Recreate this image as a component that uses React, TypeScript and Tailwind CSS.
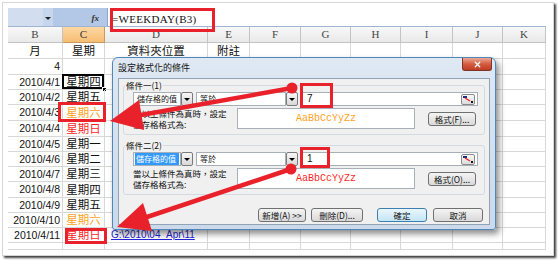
import { X } from 'lucide-react';

const COLS = [
  { id: 'B', w: 'w-[55px]' },
  { id: 'C', w: 'w-[42px]' },
  { id: 'D', w: 'w-[103px]' },
  { id: 'E', w: 'w-[42px]' },
  { id: 'F', w: 'w-[51px]' },
  { id: 'G', w: 'w-[50px]' },
  { id: 'H', w: 'w-[50px]' },
  { id: 'I', w: 'w-[52px]' },
  { id: 'J', w: 'w-[50px]' },
  { id: 'K', w: 'w-[43px]' },
];

type Row = {
  h: string;
  head?: boolean;
  date?: string;
  day?: string;
  tone?: 'orange' | 'red';
  link?: string;
  selected?: boolean;
};

const ROWS: Row[] = [
  { h: 'h-[16px]', head: true },
  { h: 'h-[16px]', date: '4' },
  { h: 'h-[15px]', date: '2010/4/1', day: '星期四', selected: true },
  { h: 'h-[15px]', date: '2010/4/2', day: '星期五' },
  { h: 'h-[16px]', date: '2010/4/3', day: '星期六', tone: 'orange' },
  { h: 'h-[16px]', date: '2010/4/4', day: '星期日', tone: 'red' },
  { h: 'h-[15px]', date: '2010/4/5', day: '星期一' },
  { h: 'h-[15px]', date: '2010/4/6', day: '星期二' },
  { h: 'h-[15px]', date: '2010/4/7', day: '星期三' },
  { h: 'h-[16px]', date: '2010/4/8', day: '星期四' },
  { h: 'h-[15px]', date: '2010/4/9', day: '星期五' },
  { h: 'h-[15px]', date: '2010/4/10', day: '星期六', tone: 'orange' },
  { h: 'h-[15px]', date: '2010/4/11', day: '星期日', tone: 'red', link: 'G:\\2010\\04_Apr\\11' },
  { h: 'h-[7px]' },
];

const cjk = "font-['Noto_Sans_CJK_TC',sans-serif]";
const toneClass = { orange: 'text-[#ffa11c]', red: 'text-[#ff1f1f]' };

function cellContent(r: Row, col: string) {
  if (r.head) {
    const label: Record<string, string> = { B: '月', C: '星期', D: '資料夾位置', E: '附註' };
    if (!label[col]) return null;
    return <span className={`w-full text-center text-[11.5px] leading-none text-[#111] ${cjk}`}>{label[col]}</span>;
  }
  if (col === 'B' && r.date) {
    return (
      <span className="w-full text-right pr-[2px] text-[10.5px] leading-none text-[#111] font-['Liberation_Sans',sans-serif]">
        {r.date}
      </span>
    );
  }
  if (col === 'C' && r.day) {
    return (
      <span className={`w-full text-center text-[11.5px] leading-none ${cjk} ${r.tone ? toneClass[r.tone] : 'text-[#111]'}`}>
        {r.day}
      </span>
    );
  }
  if (col === 'D' && r.link) {
    return (
      <span className="pl-[6px] text-[10px] leading-none text-[#2424d8] underline whitespace-nowrap font-['Liberation_Sans',sans-serif]">
        {r.link}
      </span>
    );
  }
  return null;
}

function Combo({ text, w, selected }: { text: string; w: string; selected?: boolean }) {
  return (
    <div className="flex h-full">
      <div
        className={`${w} h-full bg-white border border-[#a7afb9] flex items-center px-[1px] text-[8px] leading-none whitespace-nowrap overflow-hidden ${cjk}`}
      >
        {selected ? (
          <span className="w-full h-full flex items-center bg-[#3399ff] text-white pl-[1px]">{text}</span>
        ) : (
          <span className="pl-[2px] text-[#111]">{text}</span>
        )}
      </div>
      <div className="w-[12px] h-full border border-[#7b7b7b] rounded-[2px] bg-gradient-to-b from-[#f6f6f6] to-[#d8d8d8] flex items-center justify-center">
        <span className="w-0 h-0 border-l-[3px] border-r-[3px] border-t-[3px] border-l-transparent border-r-transparent border-t-black" />
      </div>
    </div>
  );
}

function Btn({ children, className }: { children: React.ReactNode; className: string }) {
  return (
    <div
      className={`h-[14px] rounded-[3px] border flex items-center justify-center text-[8.5px] leading-none text-[#111] whitespace-nowrap ${cjk} ${className}`}
    >
      {children}
    </div>
  );
}

function RefIcon() {
  return (
    <div className="w-[14px] h-[11px] border border-[#8a8a8a] rounded-[2px] bg-gradient-to-b from-[#f8f8f8] to-[#dcdcdc] flex items-center justify-center">
      <svg width="10" height="7" viewBox="0 0 10 7">
        <rect x="0" y="0" width="4" height="2" fill="#1c2f8a" />
        <path d="M2 2 L7 5" stroke="#e22" strokeWidth="1.4" />
        <rect x="8" y="5" width="2" height="2" fill="#111" />
      </svg>
    </div>
  );
}

function Condition({ legend, value, tone, selected }: { legend: string; value: string; tone: 'orange' | 'red'; selected?: boolean }) {
  return (
    <fieldset className="border border-[#d3dbe2] rounded-[3px] pl-[9px] pr-[6px] pb-[4px]">
      <legend className={`ml-[-8px] px-[1px] text-[8.5px] leading-[12px] text-[#111] ${cjk}`}>{legend}</legend>
      <div className="mt-[1px] flex h-[14px]">
        <Combo text="儲存格的值" w="w-[48px]" selected={selected} />
        <div className="ml-[3px]">
          <Combo text="等於" w="w-[90px]" />
        </div>
        <div className="ml-[4px] flex-1 h-full bg-white border border-[#a7afb9] flex items-center justify-between pl-[4px] pr-[2px]">
          <span className="text-[10px] leading-none text-[#111] font-['Liberation_Sans',sans-serif]">{value}</span>
          <RefIcon />
        </div>
      </div>
      <div className="mt-[2px] flex items-start">
        <div className={`w-[104px] text-[8.5px] leading-[11px] text-[#111] whitespace-nowrap ${cjk}`}>
          <div>當以上條件為真時，設定</div>
          <div>儲存格格式為:</div>
        </div>
        <div className="w-[178px] h-[21px] bg-white border border-[#a7afb9] flex items-center justify-center">
          <span className={`text-[10px] leading-none font-['Liberation_Mono',monospace] ${toneClass[tone]}`}>AaBbCcYyZz</span>
        </div>
        <Btn className="ml-[13px] mt-[4px] w-[48px] border-[#707070] bg-gradient-to-b from-[#f4f4f4] to-[#d9d9d9]">
          {tone === 'orange' ? '格式(F)...' : '格式(O)...'}
        </Btn>
      </div>
    </fieldset>
  );
}

export default function App() {
  return (
    <div className="relative w-[558px] h-[260px] bg-white pl-[2px] pt-[2px] overflow-hidden">
      <div className="w-[552px] h-[254px] border border-[#d6d6d6] shadow-[2px_2px_2px_rgba(0,0,0,0.75)] pl-[5px] pt-[5px] bg-white">
        <div className="relative w-[538px] h-[242px] overflow-hidden bg-white">
          {/* formula bar */}
          <div className="flex h-[19px] border-b border-[#9eb4d0]">
            <div className="w-[35px] bg-[#d2def0]" />
            <div className="w-[10px] bg-[#c5d6ed] flex items-center justify-center pt-[2px]">
              <span className="w-0 h-0 border-l-[3px] border-r-[3px] border-t-[3px] border-l-transparent border-r-transparent border-t-[#222]" />
            </div>
            <div className="w-[54px] bg-[#b3c8e6] flex items-center justify-end pr-[8px] pt-[2px]">
              <span className="text-[9px] italic font-bold leading-none text-[#333] font-['Liberation_Serif',serif]">fx</span>
            </div>
            <div className="flex-1 bg-white border-l border-[#8ea6c6] flex items-center pl-[4px] pt-[4px]">
              <span className="text-[11px] leading-none text-[#111] font-['Liberation_Serif',serif] tracking-[0.3px]">=WEEKDAY(B3)</span>
            </div>
          </div>

          {/* column headers */}
          <div className="flex h-[16px]">
            {COLS.map((c) => (
              <div
                key={c.id}
                className={`${c.w} shrink-0 border-r border-b flex items-center justify-center text-[11px] leading-none font-['Liberation_Serif',serif] ${
                  c.id === 'C'
                    ? 'bg-gradient-to-b from-[#fcd8a2] to-[#f7bd73] border-[#c99a5b] text-[#333]'
                    : 'bg-gradient-to-b from-[#f8f8f8] to-[#e9e9e9] border-[#c3c3c3] text-[#444]'
                }`}
              >
                {c.id}
              </div>
            ))}
          </div>

          {/* rows */}
          {ROWS.map((r, i) => (
            <div key={i} className={`flex ${r.h}`}>
              {COLS.map((c) => (
                <div key={c.id} className={`${c.w} shrink-0 border-r border-b border-[#d8d8d8] flex items-center relative`}>
                  {cellContent(r, c.id)}
                  {r.selected && c.id === 'C' && (
                    <>
                      <div className="absolute -left-[1px] -top-[1px] right-0 bottom-0 border-2 border-black" />
                      <div className="absolute -right-[3px] -bottom-[3px] w-[5px] h-[5px] bg-black border border-white" />
                    </>
                  )}
                </div>
              ))}
            </div>
          ))}

          {/* conditional formatting dialog */}
          <div className="absolute left-[104px] top-[49px] w-[384px] h-[173px] rounded-t-[6px] rounded-b-[3px] border border-[#4f88b8] bg-gradient-to-b from-[#dfe8f3] to-[#cbd9ea] shadow-[3px_4px_6px_rgba(0,0,0,0.45)] flex flex-col px-[5px] pb-[4px]">
            <div className="h-[20px] flex items-start justify-between">
              <span className={`pt-[4px] text-[9px] leading-[12px] text-[#111] ${cjk}`}>設定格式化的條件</span>
              <div className="mr-[-2px] w-[30px] h-[13px] rounded-b-[3px] border border-t-0 border-[#7d3424] bg-gradient-to-b from-[#e9a896] via-[#d45b41] to-[#bf3b22] flex items-center justify-center">
                <X size={9} strokeWidth={3.5} color="#ffffff" />
              </div>
            </div>
            <div className="flex-1 bg-[#f0f0f0] border border-[#8fa3b9] flex flex-col px-[4px]">
              <Condition legend="條件一(1)" value="7" tone="orange" />
              <div className="mt-[4px]">
                <Condition legend="條件二(2)" value="1" tone="red" selected />
              </div>
              <div className="flex justify-end pr-[2px] mt-[13px]">
                <Btn className="w-[48px] border-[#707070] bg-gradient-to-b from-[#f4f4f4] to-[#d9d9d9]">新增(A) &gt;&gt;</Btn>
                <Btn className="ml-[5px] w-[52px] border-[#707070] bg-gradient-to-b from-[#f4f4f4] to-[#d9d9d9]">刪除(D)...</Btn>
                <Btn className="ml-[14px] w-[50px] border-[#3c7fb1] bg-gradient-to-b from-[#eaf6fd] to-[#c4e5f6]">確定</Btn>
                <Btn className="ml-[6px] w-[50px] border-[#707070] bg-gradient-to-b from-[#f4f4f4] to-[#d9d9d9]">取消</Btn>
              </div>
            </div>
          </div>
        </div>
      </div>

      {/* red annotations */}
      <svg className="absolute inset-0 pointer-events-none" width="558" height="260" viewBox="0 0 558 260">
        <g fill="none" stroke="#e8212b" strokeWidth="3">
          <rect x="111.5" y="9.5" width="102" height="21" />
          <rect x="59.5" y="103.5" width="45" height="17" />
          <rect x="66.5" y="229.5" width="39" height="13" />
          <rect x="301.5" y="84.5" width="30" height="22" />
          <rect x="301.5" y="148.5" width="27" height="18" />
        </g>
        <g stroke="#e8212b" strokeWidth="4.5" strokeLinecap="round">
          <line x1="292" y1="88" x2="141" y2="115" />
          <line x1="291" y1="169" x2="147" y2="217" />
        </g>
        <g fill="#e8212b">
          <circle cx="292" cy="88" r="5.5" />
          <circle cx="291" cy="169" r="5.5" />
          <polygon points="110,121 144,130 139,100" />
          <polygon points="117,227 152,231 143,203" />
        </g>
      </svg>
    </div>
  );
}
